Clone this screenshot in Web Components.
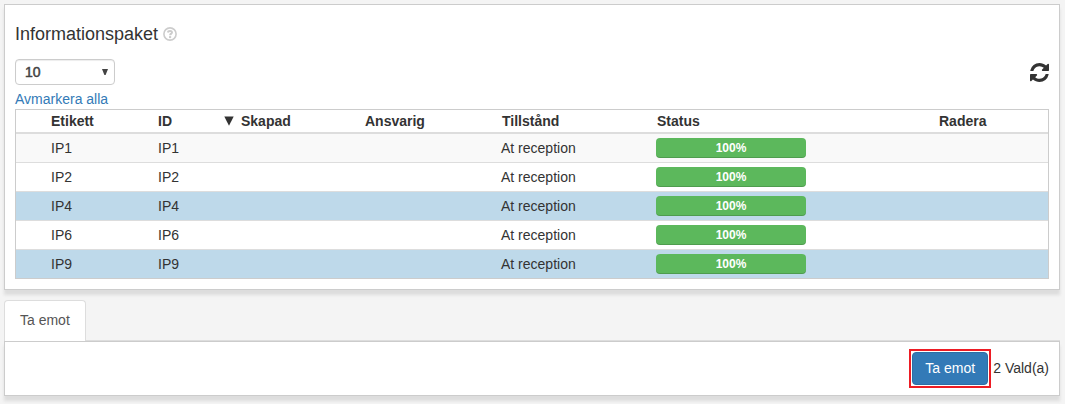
<!DOCTYPE html>
<html lang="sv">
<head>
<meta charset="utf-8">
<title>Informationspaket</title>
<style>
html,body{margin:0;height:100%;background:#f4f4f4}
body{font:14px/20px "Liberation Sans",Arial,sans-serif;color:#333;overflow:hidden}
</style>
</head>
<body>
<ip-page></ip-page>
<script>
class Base extends HTMLElement {
  connectedCallback() {
    if (this.shadowRoot) return;
    this.attachShadow({mode: 'open'}).innerHTML = '<style>*{box-sizing:border-box}' + this.css() + '</style>' + this.html();
  }
}

customElements.define('content-box', class extends Base {
  css() { return ':host{display:block;box-sizing:border-box;background:#fff;border:1px solid #ccc;box-shadow:0 5px 3px #ddd}'; }
  html() { return '<slot></slot>'; }
});

customElements.define('help-icon', class extends Base {
  css() { return ':host{display:block;width:14px;height:14px}svg{display:block}'; }
  html() {
    return '<svg width="14" height="14" viewBox="0 0 14 14" fill="none" stroke="#ccc"><circle cx="7" cy="7" r="6.1" stroke-width="1.6"/><path d="M4.8 5.5C5.1 3.3 9.1 3.4 9 5.5C8.9 6.7 7.2 6.6 7.1 8.3" stroke-width="2"/><path d="M7.1 9.1v2" stroke-width="2.1"/></svg>';
  }
});

customElements.define('refresh-icon', class extends Base {
  css() { return ':host{display:block;width:19px;height:19px}svg{display:block}'; }
  html() {
    return '<svg width="19" height="19" viewBox="0 0 1536 1536" fill="#333"><path d="M1511 928q0 5-1 7-64 268-268 434.5t-478 166.5q-146 0-282.5-55t-243.5-157l-129 129q-19 19-45 19t-45-19-19-45v-448q0-26 19-45t45-19h448q26 0 45 19t19 45-19 45l-137 137q71 66 161 102t187 36q134 0 250-65t186-179q11-17 53-117 8-23 30-23h192q13 0 22.5 9.5t9.5 22.5zm25-800v448q0 26-19 45t-45 19h-448q-26 0-45-19t-19-45 19-45l138-138q-148-137-349-137-134 0-250 65t-186 179q-11 17-53 117-8 23-30 23h-199q-13 0-22.5-9.5t-9.5-22.5v-7q65-268 270-434.5t480-166.5q146 0 284 55.5t245 156.5l130-129q19-19 45-19t45 19 19 45z"/></svg>';
  }
});

customElements.define('page-size', class extends Base {
  css() { return ':host{display:flex;box-sizing:border-box;align-items:center;justify-content:space-between;width:100px;height:26px;border:1px solid #ccc;border-radius:4px;padding:0 6px 0 9px;background:#fff;color:#444;box-shadow:inset 0 1px 1px rgba(0,0,0,.075)}.v{-webkit-text-stroke:.5px #444}svg{display:block;margin-bottom:1px}'; }
  html() { return '<span class="v"><slot></slot></span><svg width="6" height="6" viewBox="0 0 6 6"><path d="M0 0h6L3.6 6H2.4z" fill="#444"/></svg>'; }
});

customElements.define('progress-bar', class extends Base {
  css() { return ':host{display:block;box-sizing:border-box;width:150px;height:20px;border-radius:4px;background:#5cb85c;box-shadow:inset 0 -1px 0 rgba(0,0,0,.15);color:#fff;font-size:12px;font-weight:bold;line-height:20px;text-align:center}'; }
  html() { return '<slot></slot>'; }
});

customElements.define('ip-table', class extends Base {
  css() {
    return `:host{display:block;box-sizing:border-box;border:1px solid #ccc;border-bottom:0}
    .row{display:grid;grid-template-columns:107px 64px 143px 136px 155px 282px 1fr;height:29px;align-items:center;padding-left:35px;border-bottom:1px solid #ddd}
    .row:last-child{border-bottom-color:#ccc}
    .head{height:24px;font-weight:bold;border-bottom:2px solid #ddd}
    .head>:nth-child(n+5){padding-left:1px}
    .odd{background:#f9f9f9}.sel{background:#bed9ea}
    .sort{display:flex;align-items:center;padding-left:2px}
    .sort svg{margin-right:7px}
    `;
  }
  html() {
    const rows = [['IP1', 'odd'], ['IP2', ''], ['IP4', 'sel'], ['IP6', ''], ['IP9', 'sel']];
    return `<div class="row head"><span>Etikett</span><span>ID</span><span class="sort"><svg width="10" height="10" viewBox="0 0 10 10"><path d="M.3 .5h9.4L5 9.8z" fill="#333"/></svg>Skapad</span><span>Ansvarig</span><span>Tillstånd</span><span>Status</span><span>Radera</span></div>` +
      rows.map(([n, c]) => `<div class="row ${c}"><span>${n}</span><span>${n}</span><span></span><span></span><span>At reception</span><progress-bar>100%</progress-bar><span></span></div>`).join('');
  }
});

customElements.define('tab-item', class extends Base {
  css() { return ':host{display:block;box-sizing:border-box;width:82px;height:41px;padding:9px 15px;background:#fff;border:1px solid #ddd;border-bottom:0;border-radius:4px 4px 0 0;color:#555}'; }
  html() { return '<slot></slot>'; }
});

customElements.define('primary-button', class extends Base {
  css() { return ':host{display:block;border:2px solid #ed1c24;padding:1px}button{display:block;width:76px;height:33px;padding:0 0 2px;border:1px solid #2e6da4;border-radius:4px;background:#337ab7;color:#fff;font:inherit}'; }
  html() { return '<button type="button"><slot></slot></button>'; }
});

customElements.define('ip-page', class extends Base {
  css() {
    return `:host{display:block;padding:4px 5px 0 4px}
    .main{height:286px;padding:0 10px}
    .title{display:flex;align-items:center;gap:5px;padding-top:18px;height:40px}
    h4{margin:0;font-size:18px;font-weight:normal;line-height:22px}
    .tools{display:flex;justify-content:space-between;align-items:center;height:26px;margin-top:14px}
    a{display:block;height:20px;margin:4px 0 0;color:#337ab7;text-decoration:none}
    .tabs{display:flex;height:41px;margin-top:10px}
    .fill{flex:1;border-bottom:1px solid #ddd}
    .action{display:flex;align-items:center;justify-content:flex-end;gap:2px;height:55px;padding:0 10px}
    .action span{padding-bottom:2px}`;
  }
  html() {
    return `<content-box class="main"><div class="title"><h4>Informationspaket</h4><help-icon></help-icon></div>
    <div class="tools"><page-size>10</page-size><refresh-icon></refresh-icon></div>
    <a>Avmarkera alla</a><ip-table></ip-table></content-box>
    <div class="tabs"><tab-item>Ta emot</tab-item><div class="fill"></div></div>
    <content-box class="action"><primary-button>Ta emot</primary-button><span>2 Vald(a)</span></content-box>`;
  }
});
</script>
</body>
</html>
